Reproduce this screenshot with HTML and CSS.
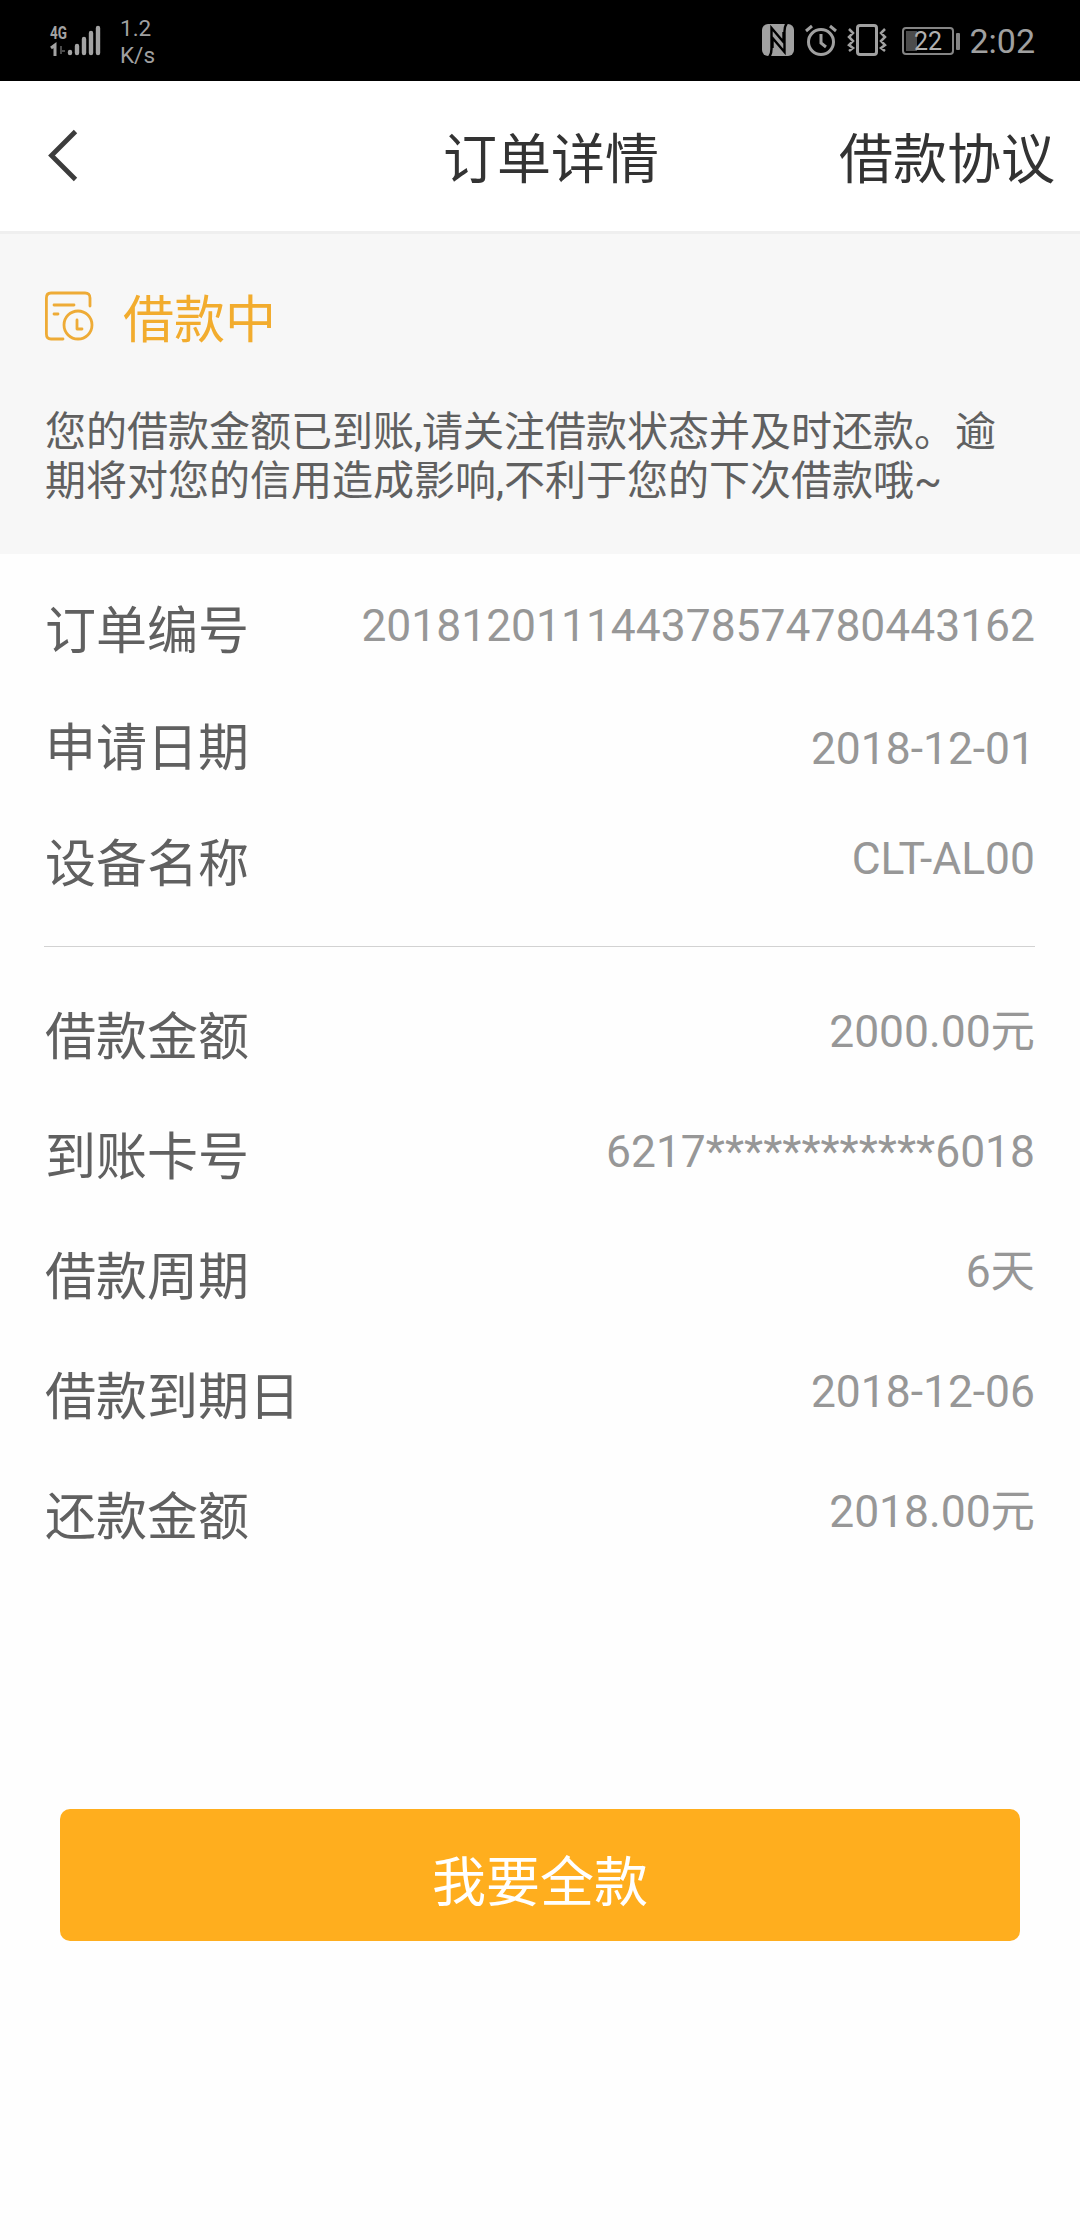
FILE: index.html
```html
<!DOCTYPE html>
<html lang="zh-CN">
<head>
<meta charset="utf-8">
<title>订单详情</title>
<link rel="stylesheet" href="styles.css">
</head>
<body>
<div class="status-bar">
  <div class="network">
    <svg class="signal" width="58" height="36" viewBox="-4 -2 58 36">
      <text class="signal-label" x="0" y="15" textLength="17" lengthAdjust="spacingAndGlyphs">4G</text>
      <path d="M1 24l4-3v11" fill="none" stroke="#a3a3a3" stroke-width="3"/>
      <path d="M11 22v8M11 27h4" fill="none" stroke="#4a4a4a" stroke-width="2"/>
      <g stroke="#a3a3a3" stroke-width="4.4" stroke-linecap="round"><path d="M20 28v1M27 22v7M34 15v14M41 9v20M48 4v25"/></g>
    </svg>
    <div class="speed"><span>1.2</span><span>K/s</span></div>
  </div>
  <div class="indicators">
    <svg class="nfc" width="32" height="32" viewBox="0 0 32 32">
      <rect width="32" height="32" rx="6" fill="#a0a0a0"/>
      <path d="M7 33Q9.500 30 9.500 25V4L21.500 18V8M25 -1Q22.500 2 22.500 7V28L10.500 14V24" fill="none" stroke="#000" stroke-width="2.4"/>
    </svg>
    <svg class="alarm" width="32" height="32" viewBox="0 0 32 32" fill="none" stroke="#a0a0a0" stroke-width="3">
      <circle cx="16" cy="18" r="12.5"/><path d="M16 10v9l5 4M1 7l6-5M25 2l6 5"/>
    </svg>
    <svg class="vibrate" width="40" height="32" viewBox="0 0 40 32" fill="none" stroke="#a0a0a0">
      <rect x="10.5" y="1.5" width="19" height="29" rx="2.5" stroke-width="3"/>
      <path d="M2 5l4 4-4 4 4 4-4 4 4 3-4 3M38 5l-4 4 4 4-4 4 4 4-4 3 4 3" stroke-width="2.5"/>
    </svg>
    <svg class="battery" width="58" height="28" viewBox="0 0 58 28">
      <rect x="1" y="1" width="50" height="26" rx="3" fill="none" stroke="#858585" stroke-width="2"/>
      <rect x="4" y="4" width="11" height="20" fill="#4c4c4c"/>
      <rect x="54" y="6" width="4" height="17" rx="1" fill="#858585"/>
      <text class="battery-label" x="26" y="22.5">22</text>
    </svg>
    <span class="clock">2:02</span>
  </div>
</div>

<header class="nav">
  <svg class="back" width="32" height="54" viewBox="0 0 32 54"><path d="M29.5 3.5L5.5 27.5L29.5 51.5" fill="none" stroke="#3c3c3c" stroke-width="4.8"/></svg>
  <h1 class="title">订单详情</h1>
  <a class="agreement">借款协议</a>
</header>

<section class="notice">
  <div class="state">
    <svg class="state-icon" width="50" height="50" viewBox="0 0 50 50" fill="none" stroke="#eeab36" stroke-width="2.8" stroke-linecap="round" stroke-linejoin="round">
      <path d="M45 15V7Q45 2 40 2H6Q1.400 2 1.400 7V43Q1.400 48 6 48H18M9 14h20M9 23h4"/>
      <circle cx="33" cy="34" r="14"/><path d="M32 29v9h5"/>
    </svg>
    <span>借款中</span>
  </div>
  <p class="message">您的借款金额已到账,请关注借款状态并及时还款。逾<br>期将对您的信用造成影响,不利于您的下次借款哦~</p>
</section>

<main>
  <dl class="details order">
    <div class="row"><dt>订单编号</dt><dd>201812011144378574780443162</dd></div>
    <div class="row row-date"><dt>申请日期</dt><dd>2018-12-01</dd></div>
    <div class="row"><dt>设备名称</dt><dd>CLT-AL00</dd></div>
  </dl>
  <dl class="details loan">
    <div class="row"><dt>借款金额</dt><dd>2000.00元</dd></div>
    <div class="row"><dt>到账卡号</dt><dd>6217************6018</dd></div>
    <div class="row"><dt>借款周期</dt><dd>6天</dd></div>
    <div class="row"><dt>借款到期日</dt><dd>2018-12-06</dd></div>
    <div class="row"><dt>还款金额</dt><dd>2018.00元</dd></div>
  </dl>
  <button class="repay">我要全款</button>
</main>
</body>
</html>
```
FILE: styles.css
```css
* { box-sizing: border-box; }
body {
  margin: 0;
  min-height: 2240px;
  background: #fefefe;
  color: #606060;
  font-family: Roboto, "Noto Sans CJK SC", sans-serif;
}
.status-bar {
  height: 81px;
  padding: 0 45px 0 46px;
  background: #000;
  color: #a0a0a0;
  display: flex;
  justify-content: space-between;
}
.network { display: flex; }
.signal { margin-top: 22px; }
.signal-label { font: 700 18px Roboto, sans-serif; fill: #a3a3a3; }
.speed {
  margin: 15px 0 0 16px;
  display: flex;
  flex-direction: column;
  font-size: 22.5px;
  line-height: 27px;
}
.indicators { display: flex; align-items: center; }
.nfc { margin-bottom: 1px; }
.alarm { margin-left: 11px; margin-bottom: 1px; }
.vibrate { margin-left: 10px; margin-right: 1px; margin-bottom: 1px; }
.battery { margin-left: 14px; }
.battery-label { font: 25px Roboto, sans-serif; fill: #b0b0b0; text-anchor: middle; }
.clock { margin-left: 9px; font-size: 34px; line-height: 40px; }

.nav {
  height: 153px;
  padding: 0 25px 0 46px;
  background: #fff;
  border-bottom: 3px solid #efefef;
  display: grid;
  grid-template-columns: 1fr auto 1fr;
  align-items: center;
  color: #333;
  font-size: 54px;
  line-height: 70px;
}
.back { margin-bottom: 3px; }
.title { margin: 9px 0 0 1px; font-size: inherit; font-weight: 400; }
.agreement { margin-top: 9px; justify-self: end; }

.notice {
  height: 320px;
  padding: 52px 45px 0;
  background: #f7f7f7;
}
.state {
  display: flex;
  align-items: center;
  gap: 28px;
  height: 70px;
  color: #f2ac2e;
  font-size: 51px;
  line-height: 70px;
}
.state-icon { margin-bottom: 11px; }
.message {
  margin: 52px 0 0;
  font-size: 41px;
  line-height: 48.5px;
  white-space: nowrap;
}

.details { margin: 0 45px 0 44px; }
.order { padding: 20px 0 22px; border-bottom: 1px solid #d2d2d2; }
.loan { padding-top: 31px; }
.row {
  display: flex;
  justify-content: space-between;
  align-items: center;
}
.order .row { height: 116.5px; }
.loan .row { height: 120px; }
dt { padding-left: 1px; font-size: 51px; line-height: 70px; }
dd {
  margin: 0;
  padding-bottom: 12px;
  color: #979797;
  font-size: 44.4px;
  line-height: 60px;
}
.order dd { padding-bottom: 13px; }
.order .row-date dd { padding: 1px 0 0; }
.repay {
  display: block;
  width: 960px;
  height: 132px;
  margin: 231px auto 0;
  padding: 19px 0 0;
  border: 0;
  border-radius: 10px;
  background: #ffae1e;
  color: #fff;
  font: 54px/70px Roboto, "Noto Sans CJK SC", sans-serif;
}
```
